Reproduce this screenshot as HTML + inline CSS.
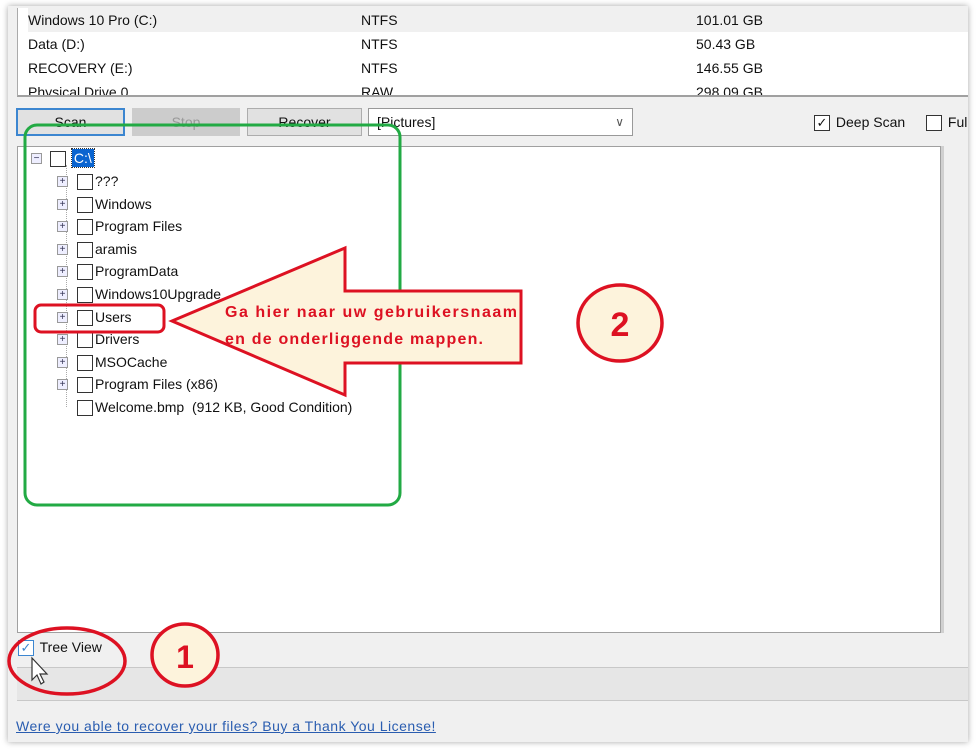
<!DOCTYPE html>
<html><head><meta charset="utf-8"><style>
*{box-sizing:border-box;margin:0;padding:0}
body{width:977px;height:750px;background:#fff;position:relative;overflow:hidden;font-family:"Liberation Sans",sans-serif;font-size:14px;color:#111}
.a{position:absolute}
.win{left:8px;top:6px;width:960px;height:736px;background:#f0f0f0;box-shadow:0 0 6px rgba(0,0,0,.35)}
.list{left:17px;top:8px;width:951px;height:89px;background:#fff;border-left:1px solid #aaa;border-bottom:2px solid #a0a0a0;overflow:hidden}
.row{position:absolute;left:10px;height:24px;line-height:24px;width:940px}
.btn{top:108px;height:28px;border:1px solid #adadad;background:#e1e1e1;text-align:center;line-height:26px;overflow:hidden}
.tree{left:17px;top:146px;width:924px;height:487px;background:#fff;border:1px solid #a0a0a0}
.cb{display:inline-block;width:16px;height:16px;border:1px solid #333;background:#fff;vertical-align:middle;margin-right:2px}
.ti{position:absolute;height:22px;line-height:22px;white-space:nowrap}
.pl{position:absolute;width:11px;height:11px;border:1px solid #999;background:#eef;font-size:10px;line-height:9px;text-align:center;color:#335}
</style></head><body>
<div class="a win"></div>
<div class="a list">
 <div class="row" style="top:0;background:#f0f0f0">Windows 10 Pro (C:)<span class="a" style="left:333px">NTFS</span><span class="a" style="left:668px">101.01 GB</span></div>
 <div class="row" style="top:24px">Data (D:)<span class="a" style="left:333px">NTFS</span><span class="a" style="left:668px">50.43 GB</span></div>
 <div class="row" style="top:48px">RECOVERY (E:)<span class="a" style="left:333px">NTFS</span><span class="a" style="left:668px">146.55 GB</span></div>
 <div class="row" style="top:72px">Physical Drive 0<span class="a" style="left:333px">RAW</span><span class="a" style="left:668px">298.09 GB</span></div>
</div>
<div class="a btn" style="left:16px;width:109px;border:2px solid #3c86d0;line-height:24px">Scan</div>
<div class="a btn" style="left:132px;width:108px;background:#ccc;color:#999;border-color:#ccc">Stop</div>
<div class="a btn" style="left:247px;width:115px">Recover</div>
<div class="a" style="left:368px;top:108px;width:265px;height:28px;border:1px solid #999;background:#fff;line-height:26px;padding-left:8px">[Pictures]<span class="a" style="right:8px;top:0;color:#555;font-size:12px">&#8744;</span></div>
<div class="a" style="left:814px;top:113px;line-height:18px;white-space:nowrap"><span class="cb" style="border-color:#333;font-size:13px;line-height:13px;text-align:center">&#10003;</span> Deep Scan</div>
<div class="a" style="left:926px;top:113px;line-height:18px;white-space:nowrap"><span class="cb"></span> Ful</div>
<div class="a" style="left:960px;top:140px;width:8px;height:600px;background:#f0f0f0"></div>
<div class="a tree"></div>
<div class="a" style="left:941px;top:146px;width:3px;height:487px;background:#d0d0d0"></div>
<div class="a" style="left:31px;top:147px;width:400px;height:280px">
 <div class="pl" style="left:0;top:6px">−</div>
 <div class="ti" style="left:19px;top:0"><span class="cb"></span> <span style="background:#0a64d0;color:#fff;padding:1px 2px;outline:1px dotted #333">C:\</span></div>
 <div class="a" style="left:35px;top:18px;width:1px;height:242px;border-left:1px dotted #aaa"></div>
 <div style="position:absolute;left:26px;top:23px">
  <div class="pl" style="left:0;top:6px">+</div><div class="ti" style="left:20px;top:0"><span class="cb"></span>???</div>
  <div class="pl" style="left:0;top:29px">+</div><div class="ti" style="left:20px;top:23px"><span class="cb"></span>Windows</div>
  <div class="pl" style="left:0;top:51px">+</div><div class="ti" style="left:20px;top:45px"><span class="cb"></span>Program Files</div>
  <div class="pl" style="left:0;top:74px">+</div><div class="ti" style="left:20px;top:68px"><span class="cb"></span>aramis</div>
  <div class="pl" style="left:0;top:96px">+</div><div class="ti" style="left:20px;top:90px"><span class="cb"></span>ProgramData</div>
  <div class="pl" style="left:0;top:119px">+</div><div class="ti" style="left:20px;top:113px"><span class="cb"></span>Windows10Upgrade</div>
  <div class="pl" style="left:0;top:142px">+</div><div class="ti" style="left:20px;top:136px"><span class="cb"></span>Users</div>
  <div class="pl" style="left:0;top:164px">+</div><div class="ti" style="left:20px;top:158px"><span class="cb"></span>Drivers</div>
  <div class="pl" style="left:0;top:187px">+</div><div class="ti" style="left:20px;top:181px"><span class="cb"></span>MSOCache</div>
  <div class="pl" style="left:0;top:209px">+</div><div class="ti" style="left:20px;top:203px"><span class="cb"></span>Program Files (x86)</div>
  <div class="ti" style="left:20px;top:226px"><span class="cb"></span>Welcome.bmp&nbsp; (912 KB, Good Condition)</div>
 </div>
</div>
<div class="a" style="left:18px;top:637px;line-height:20px;white-space:nowrap;font-size:14px"><span class="cb" style="border-color:#3c86d0;color:#3c86d0;font-size:13px;line-height:13px;text-align:center">&#10003;</span> Tree View</div>
<div class="a" style="left:17px;top:667px;width:951px;height:34px;background:#e6e6e6;border-top:1px solid #c8c8c8;border-bottom:1px solid #c8c8c8"></div>
<div class="a" style="left:16px;top:718px;color:#2a5db0;text-decoration:underline;font-size:14px;letter-spacing:0.5px">Were you able to recover your files? Buy a Thank You License!</div>
<svg class="a" style="left:0;top:0" width="977" height="750">
 <rect x="25" y="125" width="375" height="380" rx="12" fill="none" stroke="#22aa44" stroke-width="3"/>
 <polygon points="172,321 345,248 345,291 521,291 521,363 345,363 345,395" fill="#fdf3dc" stroke="#dd1122" stroke-width="3"/>
 <text x="225" y="317" fill="#dd1122" font-family="Liberation Sans,sans-serif" font-weight="bold" font-size="16" textLength="292" lengthAdjust="spacing">Ga hier naar uw gebruikersnaam</text>
 <text x="225" y="344" fill="#dd1122" font-family="Liberation Sans,sans-serif" font-weight="bold" font-size="16" textLength="258" lengthAdjust="spacing">en de onderliggende mappen.</text>
 <rect x="35" y="305" width="129" height="27" rx="6" fill="none" stroke="#dd1122" stroke-width="3"/>
 <ellipse cx="620" cy="323" rx="42" ry="38" fill="#fdf3dc" stroke="#dd1122" stroke-width="3.5"/>
 <text x="620" y="336" text-anchor="middle" fill="#dd1122" font-family="Liberation Sans,sans-serif" font-weight="bold" font-size="34">2</text>
 <ellipse cx="185" cy="655" rx="33" ry="31" fill="#fdf3dc" stroke="#dd1122" stroke-width="3.5"/>
 <text x="185" y="668" text-anchor="middle" fill="#dd1122" font-family="Liberation Sans,sans-serif" font-weight="bold" font-size="32">1</text>
 <ellipse cx="67" cy="661" rx="58" ry="33" fill="none" stroke="#dd1122" stroke-width="3.5"/>
 <path d="M32,658 L32,680 L37,675 L41,684 L44,682 L40,674 L47,674 Z" fill="#fff" stroke="#333" stroke-width="1.2"/>
</svg>
</body></html>
